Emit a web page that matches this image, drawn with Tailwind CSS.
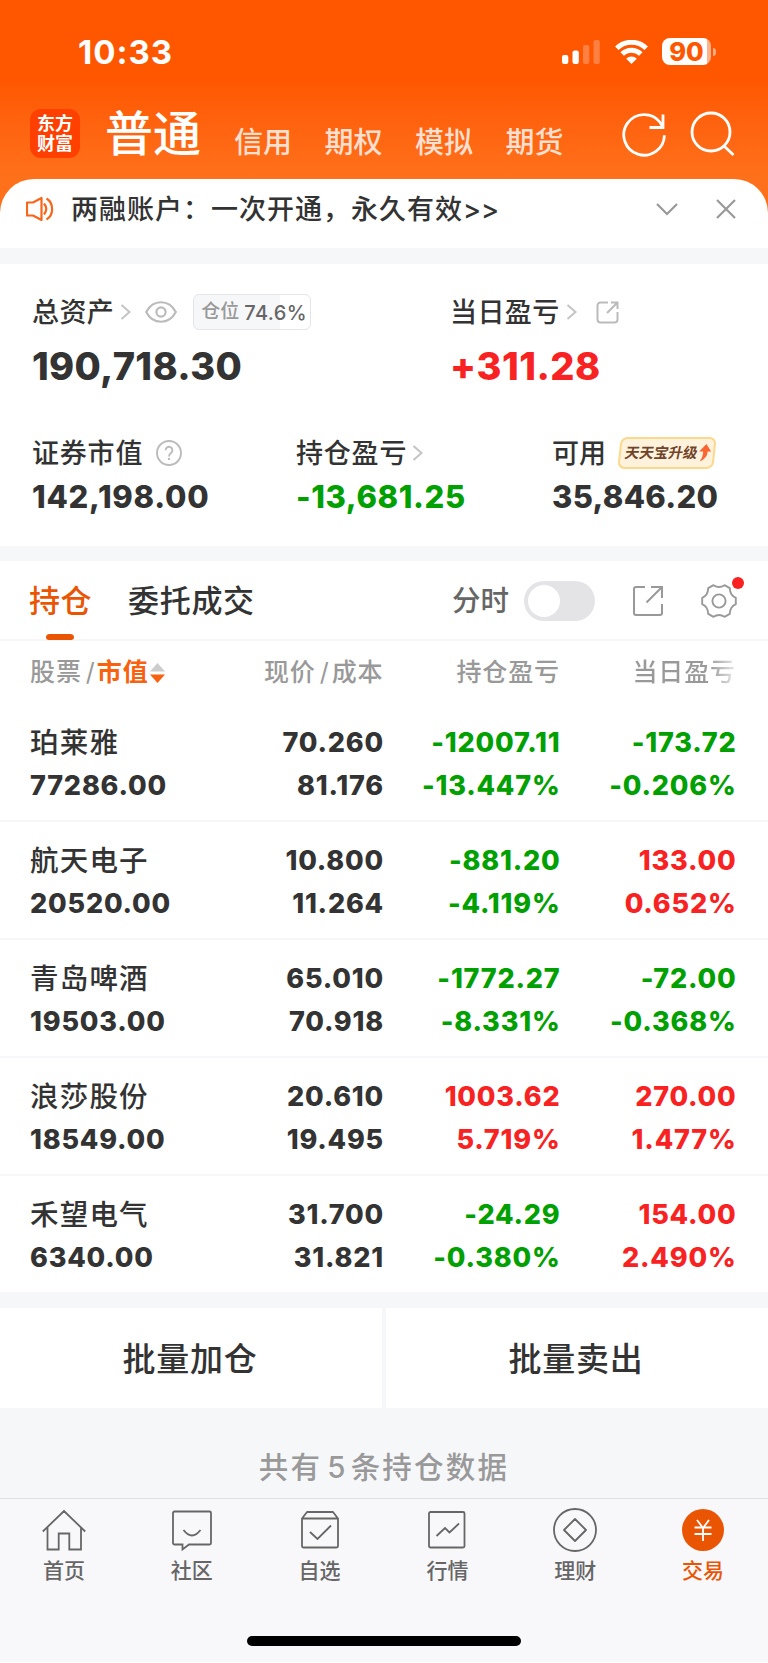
<!DOCTYPE html>
<html lang="zh-CN">
<head>
  <meta charset="UTF-8" />
  <title>持仓</title>
  <script src="https://cdn.jsdelivr.net/npm/@tailwindcss/browser@4"></script>
  <script>
    const posiciones = [
      { nombre: '珀莱雅', valor: '77286.00', precio: '70.260', costo: '81.176', total: ['-12007.11', '-13.447%'], dia: ['-173.72', '-0.206%'] },
      { nombre: '航天电子', valor: '20520.00', precio: '10.800', costo: '11.264', total: ['-881.20', '-4.119%'], dia: ['133.00', '0.652%'] },
      { nombre: '青岛啤酒', valor: '19503.00', precio: '65.010', costo: '70.918', total: ['-1772.27', '-8.331%'], dia: ['-72.00', '-0.368%'] },
      { nombre: '浪莎股份', valor: '18549.00', precio: '20.610', costo: '19.495', total: ['1003.62', '5.719%'], dia: ['270.00', '1.477%'] },
      { nombre: '禾望电气', valor: '6340.00', precio: '31.700', costo: '31.821', total: ['-24.29', '-0.380%'], dia: ['154.00', '2.490%'] },
    ];

    const color = v => v.startsWith('-') ? 'text-[#00a000]' : 'text-[#f82222]';

    document.addEventListener('DOMContentLoaded', () => {
      document.getElementById('lista').innerHTML = posiciones.map(p => `
        <div class="grid h-[118px] grid-cols-[168px_186px_176.5px_176px] border-b-2 border-[#f7f7f9] pl-[30px] pt-[18px] text-[27px] leading-[42.5px] font-extrabold tracking-[0.8px]">
          <div><p class="text-[28.5px] font-medium tracking-[1.2px]">${p.nombre}</p><p>${p.valor}</p></div>
          <div class="text-right"><p>${p.precio}</p><p>${p.costo}</p></div>
          <div class="text-right ${color(p.total[0])}"><p>${p.total[0]}</p><p>${p.total[1]}</p></div>
          <div class="text-right ${color(p.dia[0])}"><p>${p.dia[0]}</p><p>${p.dia[1]}</p></div>
        </div>`).join('');
    });
  </script>
</head>
<body class="bg-white">
<div class="flex h-[1662px] w-[768px] flex-col overflow-hidden bg-[#f6f7f9] font-['Inter','Noto_Sans_CJK_SC',sans-serif] text-[#333]">

  <!-- header -->
  <header class="h-[220px] shrink-0 bg-linear-to-b from-[#ff5600] from-35% to-[#ff701a] to-80% text-white">
    <div class="flex h-[103px] items-center pl-[78px]">
      <div class="w-[484px] text-[33px] leading-10 font-bold tracking-[1px]">10:33</div>
      <svg class="h-6 w-[38px]" viewBox="0 0 38 24" fill="#fff">
        <rect x="0" y="15" width="6.3" height="9" rx="2" />
        <rect x="10.5" y="10.5" width="6.3" height="13.5" rx="2" />
        <rect x="21" y="5" width="6.3" height="19" rx="2" opacity=".25" />
        <rect x="31.5" y="0" width="6.3" height="24" rx="2" opacity=".25" />
      </svg>
      <svg class="ml-[15px] h-6 w-[33px]" viewBox="0 0 33 24" fill="none" stroke="#fff" stroke-width="5">
        <path d="M1.8 8.3a21 21 0 0 1 29.4 0" />
        <path d="M7.2 14.1a13.2 13.2 0 0 1 18.6 0" />
        <path d="M11.2 18.7a7.5 7.5 0 0 1 10.6 0L16.5 24z" fill="#fff" stroke="none" />
      </svg>
      <div class="ml-[14px] flex h-[27px] w-[49px] items-center justify-center rounded-lg bg-linear-to-r from-white from-91% to-[#ffb18c] to-91% text-[25.5px] leading-[27px] font-extrabold text-[#ff5600]">90</div>
      <div class="ml-0.5 h-2 w-[3px] rounded-r-full bg-[#ffaa80]"></div>
    </div>
    <div class="flex h-[76px] items-start pl-[30px]">
      <div class="mt-[6px] h-[49px] w-[50px] rounded-[11px] bg-[#ff4000] pt-[5px] text-center text-[18px] leading-[20px] font-bold">东方<br>财富</div>
      <div class="ml-[25px] w-[129px] text-[48px] leading-[62px] font-medium">普通</div>
      <div class="mt-[19px] flex w-[387px] gap-[32.5px] text-[29px] leading-[42px] font-medium text-[#ffdfcf]"><span>信用</span><span>期权</span><span>模拟</span><span>期货</span></div>
      <svg class="mt-[8px] h-[46px] w-[46px]" viewBox="0 0 46 46" fill="none" stroke="#fff" stroke-width="2.8">
        <path d="M43.4 24.2A20.3 20.3 0 1 1 39.2 11.5l2 3.5" />
        <path d="M42 3.5V16.5H28.5" />
      </svg>
      <svg class="mt-[8px] ml-[22px] h-[46px] w-[46px]" viewBox="0 0 46 46" fill="none" stroke="#fff" stroke-width="2.8">
        <circle cx="22" cy="21" r="19" /><path d="M35 35l9.5 9" />
      </svg>
    </div>
  </header>

  <!-- notice -->
  <div class="-mt-[41px] flex h-[69px] shrink-0 items-start rounded-t-[34px] bg-white pt-[9px] pl-[26px]">
    <svg class="mt-[8px] h-[26px] w-7" viewBox="0 0 28 26" fill="none" stroke="#f8661b" stroke-width="2.2" stroke-linejoin="round">
      <path d="M1 6.5h6L15.5 2v22L7 19.5H1z" /><path d="M18 7.5q4.5 5.5 0 11" /><path d="M20.500 2.500c7.500 4.500 7.500 16.500 0 21" />
    </svg>
    <div class="ml-[17px] w-[585px] text-[27px] leading-[44px] font-medium tracking-[1px]">两融账户：一次开通，永久有效<span class="tracking-normal">&gt;&gt;</span></div>
    <svg class="mt-[14px] h-[14px] w-[22px]" viewBox="0 0 22 14" fill="none" stroke="#999" stroke-width="2.2"><path d="M1 2l10 10L21 2" /></svg>
    <svg class="mt-[11px] ml-[38px] h-5 w-5" viewBox="0 0 20 20" fill="none" stroke="#999" stroke-width="2.2"><path d="M1 1l18 18M19 1L1 19" /></svg>
  </div>

  <!-- summary -->
  <section class="mt-4 h-[282px] shrink-0 bg-white pt-[28px] pl-8 text-[27px] font-medium">
    <div class="flex">
      <div class="w-[418px]">
        <div class="flex h-10 items-center">
          <span class="pt-0.5 tracking-[0.4px]">总资产</span>
          <svg class="ml-[6px] h-4 w-[11px]" viewBox="0 0 11 16" fill="none" stroke="#c4c4c4" stroke-width="2"><path d="M1.5 1l8 7-8 7" /></svg>
          <svg class="ml-[14px] h-[22px] w-8" viewBox="0 0 32 22" fill="none" stroke="#bbb" stroke-width="2.2"><path d="M1.2 11C8-2 24-2 30.8 11 24 24 8 24 1.2 11z" /><circle cx="16" cy="11" r="4.6" /></svg>
          <div class="ml-[16px] flex h-[36px] w-[118px] items-center rounded-md border border-[#e5e5e8] bg-linear-to-r from-[#f6f7f9] from-74% to-white to-74% pl-[7px] text-[19px] whitespace-nowrap text-[#666]"><span class="mr-[5px] text-[#999]">仓位</span><span class="pt-px text-[20px] tracking-[0.4px]">74.6%</span></div>
        </div>
        <div class="mt-[11px] text-[38px] leading-[46px] font-extrabold tracking-[0.35px]">190,718.30</div>
      </div>
      <div>
        <div class="flex h-10 items-center">
          <span class="pt-0.5 tracking-[0.4px]">当日盈亏</span>
          <svg class="ml-[6px] h-4 w-[11px]" viewBox="0 0 11 16" fill="none" stroke="#c4c4c4" stroke-width="2"><path d="M1.5 1l8 7-8 7" /></svg>
          <svg class="ml-[19px] h-[23px] w-[23px]" viewBox="0 0 23 23" fill="none" stroke="#bbb" stroke-width="2"><path d="M12 1.5H4.5a3 3 0 0 0-3 3v14a3 3 0 0 0 3 3h14a3 3 0 0 0 3-3v-7.500M15 1.5h6.5V8M21.5 1.5L11 12" /></svg>
        </div>
        <div class="mt-[11px] text-[38px] leading-[46px] font-extrabold tracking-[0.5px] text-[#f82222]">+311.28</div>
      </div>
    </div>
    <div class="mt-[44px] flex">
      <div class="w-[264px]">
        <div class="flex h-10 items-center">
          <span class="pt-0.5 tracking-[0.8px]">证券市值</span>
          <svg class="ml-[13px] h-[26px] w-[26px]" viewBox="0 0 26 26" fill="none" stroke="#bbb" stroke-width="1.9"><circle cx="13" cy="13" r="12" /><path d="M9.6 10.2a3.4 3.4 0 1 1 5.6 2.6q-2.2 1.6-2.2 3.6M13 18v2" /></svg>
        </div>
        <div class="mt-[5px] text-[31px] leading-[38px] font-extrabold tracking-[0.75px]">142,198.00</div>
      </div>
      <div class="w-[256px]">
        <div class="flex h-10 items-center">
          <span class="pt-0.5 tracking-[0.8px]">持仓盈亏</span>
          <svg class="ml-[5px] h-4 w-[11px]" viewBox="0 0 11 16" fill="none" stroke="#c4c4c4" stroke-width="2"><path d="M1.5 1l8 7-8 7" /></svg>
        </div>
        <div class="mt-[5px] text-[31px] leading-[38px] font-extrabold tracking-[0.6px] text-[#00a000]">-13,681.25</div>
      </div>
      <div>
        <div class="flex h-10 items-center">
          <span class="pt-0.5">可用</span>
          <div class="ml-[13px] flex h-8 w-[96px] -skew-x-6 items-center rounded-[7px] border-2 border-[#fbd88c] bg-[#fff2dc] pl-[4px] text-[14.5px] font-bold text-[#70442a]">
            <span class="-skew-x-6 whitespace-nowrap">天天宝升级</span>
            <svg class="ml-px h-[18px] w-3 shrink-0" viewBox="0 0 12 18" fill="#fa6534"><path d="M6.5 0L12 7.5H8.5Q9 14 1.5 17.5 4.5 13 4 7.5H0z" /></svg>
          </div>
        </div>
        <div class="mt-[5px] text-[31px] leading-[38px] font-extrabold tracking-[0.3px]">35,846.20</div>
      </div>
    </div>
  </section>

  <!-- tabs -->
  <nav class="mt-[15px] flex h-[80px] shrink-0 items-center border-b-2 border-[#f7f7f9] bg-white pt-px pl-[29px] text-[31px] font-medium">
    <div class="relative flex h-full w-[99px] items-center pt-px tracking-[0.5px] text-[#ea5504]">持仓<span class="absolute -bottom-px left-[17px] h-1.5 w-[28px] rounded-t-md rounded-b-sm bg-[#ea5504]"></span></div>
    <div class="w-[324px] pt-px tracking-[0.7px]">委托成交</div>
    <div class="w-[72px] pt-px text-[28.5px] text-[#666]">分时</div>
    <div class="flex h-10 w-[71px] items-center rounded-full bg-[#e4e4e6] pl-1"><span class="size-8 rounded-full bg-white"></span></div>
    <svg class="ml-[38px] h-[30px] w-[30px]" viewBox="0 0 30 30" fill="none" stroke="#999" stroke-width="2"><path d="M12 1H3a2 2 0 0 0-2 2v24a2 2 0 0 0 2 2h24a2 2 0 0 0 2-2v-9M18 1h11v11M29 1L13.5 16.5" /></svg>
    <div class="relative ml-[38px] size-9">
      <svg class="size-9" viewBox="0 0 36 36" fill="none" stroke="#999" stroke-width="1.9" stroke-linejoin="round">
        <path d="M12.5 2.200q5.500 3.600 11 0l5.300 3q.2 7 6 9.600v6.400q-5.800 2.600-6 9.600l-5.300 3q-5.500-3.600-11 0l-5.300-3q-.2-7-6-9.600v-6.400q5.800-2.600 6-9.600z" /><circle cx="18" cy="18" r="6.6" />
      </svg>
      <span class="absolute -top-[6px] -right-[7px] size-3 rounded-full bg-[#f82222]"></span>
    </div>
  </nav>

  <!-- holdings -->
  <section class="shrink-0 bg-white">
    <div class="grid h-[63px] grid-cols-[168px_185.5px_176.5px_176px] items-center pt-px pl-[30px] text-[25px] font-medium tracking-[0.9px] text-[#999]">
      <div class="flex items-center whitespace-nowrap">股票<span class="mr-px ml-[4px] font-normal">/</span><span class="font-bold text-[#f8610f]">市值</span>
        <svg class="ml-px h-[22px] w-[15px] shrink-0" viewBox="0 0 15 22"><path d="M7.5 1L15 9.5H0z" fill="#ccc" /><path d="M7.5 21L0 12.5h15z" fill="#f8610f" /></svg>
      </div>
      <div class="text-right">现价<span class="mr-[2px] ml-[4px] font-normal">/</span>成本</div>
      <div class="text-right">持仓盈亏</div>
      <div class="bg-linear-to-r from-[#999] from-85% to-[#999]/20 bg-clip-text text-right text-transparent">当日盈亏</div>
    </div>
    <div id="lista"></div>
  </section>

  <div class="mt-[14px] flex h-[100px] shrink-0 gap-[4px] text-[33px] font-medium tracking-[0.7px]">
    <div class="flex flex-1 items-center justify-center bg-white pt-[3px] pr-0.5">批量加仓</div>
    <div class="flex flex-1 items-center justify-center bg-white pt-[3px] pr-0.5">批量卖出</div>
  </div>
  <div class="h-[90px] shrink-0 pt-[37px] text-center text-[29.5px] leading-[44px] font-medium tracking-[2.2px] text-[#999]">共有<span class="mr-[3px] ml-[5px]">5</span>条持仓数据</div>

  <!-- tab bar -->
  <footer class="flex-1 border-t border-[#dfe0e3] bg-[#f8f8fb]">
    <div class="grid grid-cols-6 pt-[9px] pr-px text-[21px] leading-[30px] font-medium text-[#666]">
      <div class="flex flex-col items-center gap-1">
        <svg class="size-11" viewBox="0 0 44 44" fill="none" stroke="#666" stroke-width="1.8"><path d="M.8 23.5L22 3l21.200 20.500M5.500 19.500V41.500H16.700V25.500H27.300V41.500H39V19.500" /></svg>首页
      </div>
      <div class="flex flex-col items-center gap-1">
        <svg class="size-11" viewBox="0 0 44 44" fill="none" stroke="#666" stroke-width="1.8"><path d="M4.500 3.500h35a1.500 1.500 0 0 1 1.500 1.500v30a1.500 1.500 0 0 1-1.500 1.500H19l-6.500 5v-5h-8A1.500 1.500 0 0 1 3 35V5a1.500 1.500 0 0 1 1.500-1.500z" /><path d="M13.500 22q8.500 11 17 0" /></svg>社区
      </div>
      <div class="flex flex-col items-center gap-1">
        <svg class="size-11" viewBox="0 0 44 44" fill="none" stroke="#666" stroke-width="1.8" stroke-linejoin="round"><path d="M4 10.500L9 4h26l5 6.500V38a1.500 1.500 0 0 1-1.500 1.500h-33A1.500 1.500 0 0 1 4 38zH40" /><path d="M12 24l7.500 7L33 17.500" stroke-linejoin="miter" /></svg>自选
      </div>
      <div class="flex flex-col items-center gap-1">
        <svg class="size-11" viewBox="0 0 44 44" fill="none" stroke="#666" stroke-width="1.8"><rect x="4" y="4" width="35.500" height="35.500" rx="1.500" /><path d="M11.500 28l8.500-8 4.500 4.500 9.500-9" /></svg>行情
      </div>
      <div class="flex flex-col items-center gap-1">
        <svg class="size-11" viewBox="0 0 44 44" fill="none" stroke="#666" stroke-width="1.8" stroke-linejoin="round"><circle cx="22" cy="22" r="21" /><path d="M22 11l11 11-11 11-11-11z" /></svg>理财
      </div>
      <div class="flex flex-col items-center gap-1 text-[#ea5504]">
        <svg class="size-11" viewBox="0 0 44 44" fill="none" stroke="#fff" stroke-width="1.8"><circle cx="22" cy="22" r="21" fill="#ea5504" stroke="none" /><path d="M16 12l6 8 6-8M22 20v13M13.500 19.500h17M13.500 26h17" /></svg>交易
      </div>
    </div>
    <div class="mx-auto mt-[50px] h-2.5 w-[274px] rounded-full bg-black"></div>
  </footer>
</div>
</body>
</html>
